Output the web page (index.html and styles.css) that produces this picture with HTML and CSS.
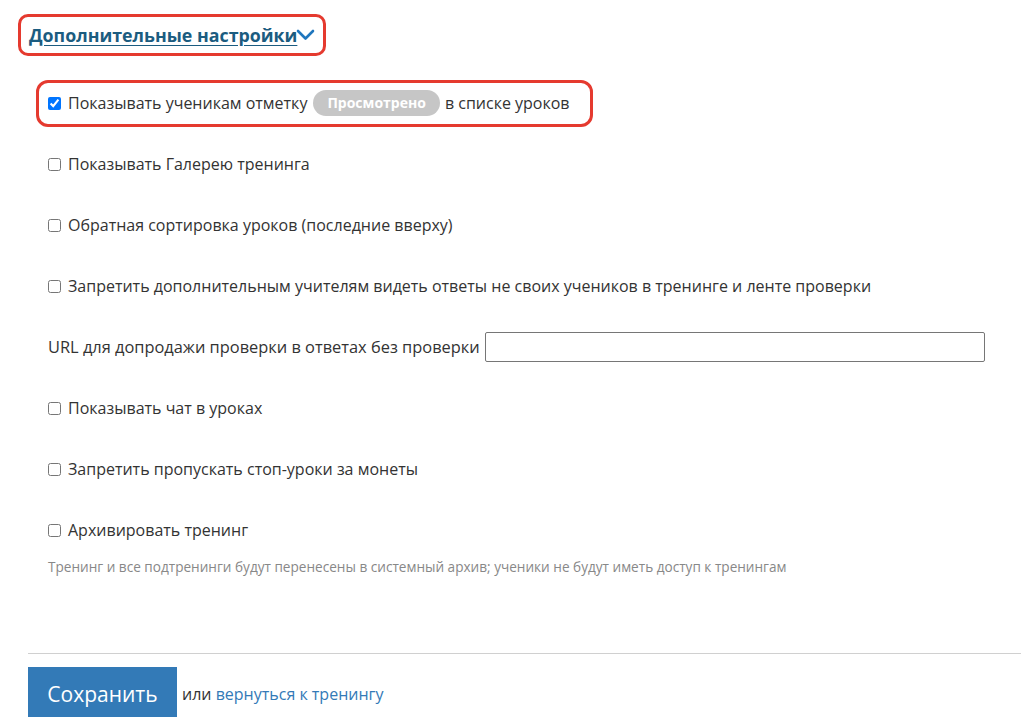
FILE: index.html
```html
<!DOCTYPE html>
<html lang="ru">
<head>
    <meta charset="UTF-8">
    <meta name="viewport" content="width=device-width, initial-scale=1.0">
    <title>Дополнительные настройки</title>
    <link rel="stylesheet" href="styles.css">
</head>
<body>
    <div class="page">
        <a href="#" class="toggle">
            <span class="toggle-text">Дополнительные настройки</span>
            <svg class="chevron" width="19" height="12" viewBox="0 0 19 12">
                <path d="M2 2 L9.5 9.5 L17 2" fill="none" stroke="#1f76bd" stroke-width="2.6" stroke-linecap="round" stroke-linejoin="round"/>
            </svg>
        </a>

        <div class="settings-list">
            <label class="row row-marked">
                <input type="checkbox" checked>
                <span>Показывать ученикам отметку</span>
                <span class="badge">Просмотрено</span>
                <span>в списке уроков</span>
            </label>
            <label class="row">
                <input type="checkbox">
                <span>Показывать Галерею тренинга</span>
            </label>
            <label class="row">
                <input type="checkbox">
                <span>Обратная сортировка уроков (последние вверху)</span>
            </label>
            <label class="row">
                <input type="checkbox">
                <span>Запретить дополнительным учителям видеть ответы не своих учеников в тренинге и ленте проверки</span>
            </label>
            <div class="row url-row">
                <span class="url-label">URL для допродажи проверки в ответах без проверки</span>
                <input type="text" class="url-input">
            </div>
            <label class="row">
                <input type="checkbox">
                <span>Показывать чат в уроках</span>
            </label>
            <label class="row">
                <input type="checkbox">
                <span>Запретить пропускать стоп-уроки за монеты</span>
            </label>
            <div class="archive">
                <label class="row">
                    <input type="checkbox">
                    <span>Архивировать тренинг</span>
                </label>
                <p class="hint">Тренинг и все подтренинги будут перенесены в системный архив; ученики не будут иметь доступ к тренингам</p>
            </div>
        </div>

        <hr class="divider">

        <div class="actions">
            <button class="save-btn">Сохранить</button>
            <span class="or">или <a href="#">вернуться к тренингу</a></span>
        </div>
    </div>
</body>
</html>
```

FILE: styles.css
```css
body {
    margin: 0;
    background-color: #fff;
    color: #333;
    font-family: "Open Sans", Lato, sans-serif;
    font-size: 16px;
}

.page {
    padding-left: 28px;
}

.toggle {
    display: inline-flex;
    align-items: center;
    margin: 20px 0 0 -4px;
    padding: 0 5px;
    line-height: 30px;
    color: #1b5c80;
    font-weight: bold;
    font-size: 17.8px;
    text-decoration: none;
    outline: 3px solid #e53a2f;
    outline-offset: 3px;
    border-radius: 4px;
}

.toggle-text {
    text-decoration: underline;
    text-underline-offset: 3px;
}

.chevron {
    margin-left: -1px;
}

.settings-list {
    display: flex;
    flex-direction: column;
    align-items: flex-start;
    gap: 35px;
    margin-top: 40px;
    padding-left: 20px;
}

.row {
    display: flex;
    align-items: center;
    height: 26px;
    line-height: 26px;
}

.row input[type="checkbox"] {
    margin: 0 7px 0 0;
    width: 13px;
    height: 13px;
}

.row-marked {
    margin: -3px 0 -4px -5px;
    padding: 3px 16px 4px 5px;
    outline: 3px solid #e53a2f;
    outline-offset: 4px;
    border-radius: 5px;
}

.badge {
    display: inline-block;
    margin: 0 5px 0 6px;
    padding: 0 14px;
    height: 26px;
    line-height: 26px;
    border-radius: 13px;
    background-color: #c6c6c6;
    color: #fff;
    font-weight: bold;
    font-size: 14px;
}

.url-label {
    font-size: 16.4px;
}

.url-input {
    width: 500px;
    height: 30px;
    box-sizing: border-box;
    margin-left: 5px;
    border: 1px solid #767676;
    border-radius: 2px;
}

.hint {
    margin: 14px 0 0;
    font-size: 13.6px;
    color: #888;
}

.divider {
    margin: 77px 0 0;
    border: none;
    border-top: 1px solid #d0d0d0;
}

.actions {
    display: flex;
    align-items: center;
    margin-top: 13px;
}

.save-btn {
    width: 149px;
    height: 54px;
    border: none;
    background-color: #337ab7;
    color: #fff;
    font-family: inherit;
    font-size: 21px;
    cursor: pointer;
}

.or {
    margin-left: 5px;
}

.or a {
    color: #337ab7;
    text-decoration: none;
}
```
